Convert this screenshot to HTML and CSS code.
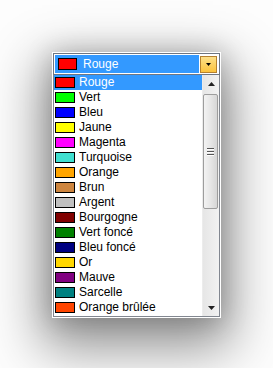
FILE: index.html
```html
<!DOCTYPE html>
<html lang="fr">
<head>
    <meta charset="UTF-8">
    <title>Couleurs</title>
    <link rel="stylesheet" href="styles.css">
</head>
<body>
    <div class="frame">
        <div class="combo">
            <div class="combo-value">
                <span class="swatch big" style="background:#ff0000"></span>
                <span class="label">Rouge</span>
            </div>
            <div class="combo-btn">
                <svg width="5" height="3" viewBox="0 0 5 3"><path d="M0 0h5L2.5 3z" fill="#000"/></svg>
            </div>
        </div>
        <div class="list">
            <ul class="items">
                <li class="selected"><span class="swatch" style="background:#ff0000"></span>Rouge</li>
                <li><span class="swatch" style="background:#00ff00"></span>Vert</li>
                <li><span class="swatch" style="background:#0000ff"></span>Bleu</li>
                <li><span class="swatch" style="background:#ffff00"></span>Jaune</li>
                <li><span class="swatch" style="background:#ff00ff"></span>Magenta</li>
                <li><span class="swatch" style="background:#40e0d0"></span>Turquoise</li>
                <li><span class="swatch" style="background:#ffa500"></span>Orange</li>
                <li><span class="swatch" style="background:#cd853f"></span>Brun</li>
                <li><span class="swatch" style="background:#c0c0c0"></span>Argent</li>
                <li><span class="swatch" style="background:#800000"></span>Bourgogne</li>
                <li><span class="swatch" style="background:#008000"></span>Vert foncé</li>
                <li><span class="swatch" style="background:#000080"></span>Bleu foncé</li>
                <li><span class="swatch" style="background:#ffd700"></span>Or</li>
                <li><span class="swatch" style="background:#800080"></span>Mauve</li>
                <li><span class="swatch" style="background:#008080"></span>Sarcelle</li>
                <li><span class="swatch" style="background:#ff4500"></span>Orange brûlée</li>
            </ul>
            <div class="scrollbar">
                <div class="arrow">
                    <svg width="7" height="4" viewBox="0 0 7 4"><path d="M0 4h7L3.5 0z" fill="#222"/></svg>
                </div>
                <div class="track">
                    <div class="thumb">
                        <span class="grip"></span>
                        <span class="grip"></span>
                        <span class="grip"></span>
                    </div>
                </div>
                <div class="arrow">
                    <svg width="7" height="4" viewBox="0 0 7 4"><path d="M0 0h7L3.5 4z" fill="#222"/></svg>
                </div>
            </div>
        </div>
    </div>
</body>
</html>
```
FILE: styles.css
```css
html {
    background: #fdfdfd;
}

body {
    margin: 0;
    height: 368px;
    padding-top: 52px;
    box-sizing: border-box;
    font-family: "Liberation Sans", Arial, sans-serif;
    font-size: 12px;
    overflow: hidden;
}

.frame {
    margin-left: 52px;
    width: 169px;
    padding: 1px;
    box-sizing: border-box;
    background: #fff;
    box-shadow: 0 20px 50px 10px rgba(0, 0, 0, 0.42),
                0 2px 24px 2px rgba(0, 0, 0, 0.18);
}

.combo {
    display: flex;
    align-items: center;
    height: 22px;
    padding: 1px;
    border: 1px solid #6f7682;
    box-sizing: border-box;
    gap: 1px;
}

.combo-value {
    flex: 1;
    height: 18px;
    background: #3399ff;
    display: flex;
    align-items: center;
    color: #fff;
}

.swatch {
    display: inline-block;
    width: 20px;
    height: 11px;
    border: 1px solid #000;
    box-sizing: border-box;
    flex: none;
}

.swatch.big {
    width: 19px;
    height: 12px;
    margin-left: 3px;
}

.combo-value .label {
    margin-left: 6px;
}

.combo-btn {
    width: 17px;
    height: 17px;
    box-sizing: border-box;
    border: 1px solid #b5812f;
    background: linear-gradient(#fde08a, #fcc33d);
    display: flex;
    align-items: center;
    justify-content: center;
    margin-right: 1px;
}

.list {
    display: flex;
    border: 1px solid #828790;
    border-top: none;
    height: 242px;
    box-sizing: border-box;
}

.items {
    list-style: none;
    margin: 0;
    padding: 0;
    flex: 1;
    overflow: hidden;
}

.items li {
    height: 15px;
    display: flex;
    align-items: center;
    gap: 4px;
    padding-left: 1px;
    line-height: 15px;
    white-space: nowrap;
    color: #000;
}

.items li.selected {
    background: #3399ff;
    color: #fff;
}

.scrollbar {
    width: 17px;
    flex: none;
    display: flex;
    flex-direction: column;
    background: linear-gradient(to right, #e6e6e6, #f2f2f2);
    border-left: 1px solid #ececec;
    box-sizing: border-box;
}

.arrow {
    height: 17px;
    display: flex;
    align-items: center;
    justify-content: center;
}

.track {
    flex: 1;
    padding: 1px 1px 2px 0;
}

.thumb {
    height: 115px;
    margin-top: 1px;
    border: 1px solid #9d9d9d;
    border-radius: 2px;
    background: linear-gradient(to right, #f3f3f3, #e6e6e6 50%, #d6d6d6);
    display: flex;
    flex-direction: column;
    align-items: center;
    justify-content: center;
    gap: 2px;
    box-sizing: border-box;
}

.grip {
    width: 7px;
    height: 1px;
    background: #555;
    box-shadow: 0 1px 0 #fff;
}
```
